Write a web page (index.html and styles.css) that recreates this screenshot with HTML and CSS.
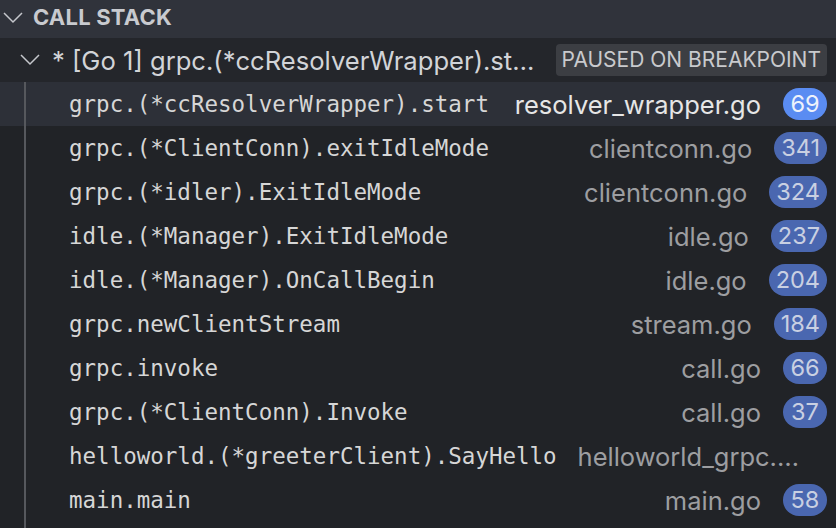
FILE: index.html
```html
<!DOCTYPE html>
<html>
<head>
<meta charset="utf-8">
<link rel="stylesheet" href="styles.css">
</head>
<body>
<div class="panel">
  <div class="header">
    <svg class="chev chev-h" viewBox="0 0 20 12" width="20" height="12"><path d="M1 1 L10 10 L19 1" fill="none" stroke="#c5c7cc" stroke-width="1.5"/></svg>
    <span class="title">CALL STACK</span>
  </div>
  <div class="thread">
    <svg class="chev chev-t" viewBox="0 0 20 12" width="20" height="12"><path d="M1 1 L10 10 L19 1" fill="none" stroke="#c5c7cc" stroke-width="1.5"/></svg>
    <span class="tlabel">* [Go 1] grpc.(*ccResolverWrapper).st…</span>
    <span class="state">PAUSED ON BREAKPOINT</span>
  </div>
  <div class="frames">
    <div class="frame selected"><span class="guide"></span><span class="fn">grpc.(*ccResolverWrapper).start</span><span class="file">resolver_wrapper.go</span><span class="line">69</span></div>
    <div class="frame"><span class="guide"></span><span class="fn">grpc.(*ClientConn).exitIdleMode</span><span class="file">clientconn.go</span><span class="line">341</span></div>
    <div class="frame"><span class="guide"></span><span class="fn">grpc.(*idler).ExitIdleMode</span><span class="file">clientconn.go</span><span class="line">324</span></div>
    <div class="frame"><span class="guide"></span><span class="fn">idle.(*Manager).ExitIdleMode</span><span class="file">idle.go</span><span class="line">237</span></div>
    <div class="frame"><span class="guide"></span><span class="fn">idle.(*Manager).OnCallBegin</span><span class="file">idle.go</span><span class="line">204</span></div>
    <div class="frame"><span class="guide"></span><span class="fn">grpc.newClientStream</span><span class="file">stream.go</span><span class="line">184</span></div>
    <div class="frame"><span class="guide"></span><span class="fn">grpc.invoke</span><span class="file">call.go</span><span class="line">66</span></div>
    <div class="frame"><span class="guide"></span><span class="fn">grpc.(*ClientConn).Invoke</span><span class="file">call.go</span><span class="line">37</span></div>
    <div class="frame"><span class="guide"></span><span class="fn">helloworld.(*greeterClient).SayHello</span><span class="file nobadge">helloworld_grpc.…</span></div>
    <div class="frame"><span class="guide"></span><span class="fn">main.main</span><span class="file">main.go</span><span class="line">58</span></div>
    <div class="frame empty"><span class="guide"></span></div>
  </div>
</div>
</body>
</html>
```
FILE: styles.css
```css
html, body {
  margin: 0;
  padding: 0;
  background: #212327;
}
.panel {
  width: 836px;
  height: 528px;
  overflow: hidden;
  font-family: Inter, "Noto Sans", sans-serif;
}
.header {
  height: 38px;
  box-sizing: border-box;
  padding-bottom: 5px;
  background: #30333b;
  display: flex;
  align-items: center;
}
.chev-h {
  margin-left: 3px;
  margin-right: 10px;
  margin-top: 2px;
}
.title {
  font-size: 22px;
  font-weight: 700;
  color: #c8cacf;
  letter-spacing: 0.2px;
}
.thread {
  height: 44px;
  background: #24262b;
  display: flex;
  align-items: center;
}
.chev-t {
  margin-left: 20px;
  margin-right: 12px;
}
.tlabel {
  font-size: 25.6px;
  color: #d2d4d8;
  white-space: nowrap;
}
.state {
  margin-left: auto;
  margin-right: 9px;
  height: 32px;
  line-height: 32px;
  padding: 0 6px;
  border-radius: 4px;
  background: #3c3e43;
  color: #c9cacd;
  font-size: 21px;
  white-space: nowrap;
}
.frame {
  height: 44px;
  display: flex;
  align-items: center;
}
.frame.selected {
  background: #2d3038;
}
.guide {
  align-self: stretch;
  width: 24px;
  flex-shrink: 0;
  border-right: 2px solid #56585d;
}
.fn {
  margin-left: 43px;
  font-family: "DejaVu Sans Mono", monospace;
  font-size: 22.5px;
  color: #d6d6d6;
  white-space: nowrap;
  flex-shrink: 0;
}
.file {
  flex: 1;
  min-width: 0;
  text-align: right;
  white-space: nowrap;
  overflow: hidden;
  text-overflow: ellipsis;
  padding-left: 20px;
  font-size: 25.5px;
  color: #9d9ea1;
}
.selected .file {
  color: #e6e6e6;
}
.file.nobadge {
  margin-right: 37px;
}
.line {
  margin-left: 22px;
  margin-right: 9px;
  height: 32px;
  line-height: 32px;
  min-width: 44px;
  box-sizing: border-box;
  padding: 0 7px;
  border-radius: 16px;
  background: #4a67b0;
  color: #c9d0e2;
  font-size: 23.5px;
  text-align: center;
}
.selected .line {
  background: #5a8cf2;
  color: #eef2fb;
}
```
